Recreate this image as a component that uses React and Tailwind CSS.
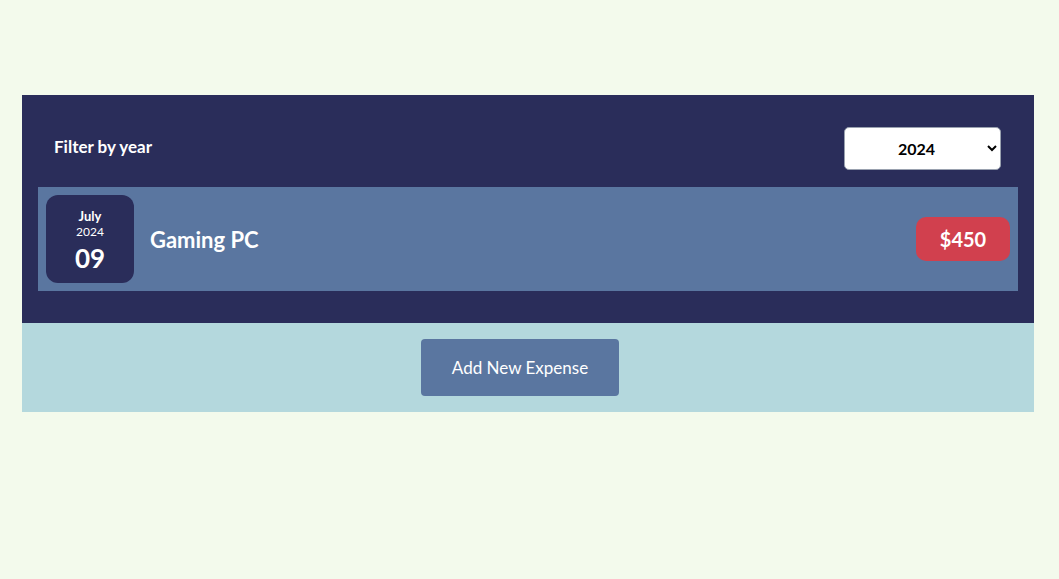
import { useState } from "react";

const expenses = [
  { id: 1, title: "Gaming PC", amount: 450, month: "July", year: "2024", day: "09" },
];

export default function App() {
  const [year, setYear] = useState("2024");

  return (
    <div className="min-h-screen bg-[#f3faec] pt-[95px] font-['Lato',sans-serif]">
      <div className="ml-[22px] w-[1012px]">
        <div className="bg-[#2a2d5a] p-4">
          <div className="flex items-center justify-between pl-4 pr-[17px] pt-4 pb-[17px]">
            <span className="text-white font-bold text-[17px] -mt-1">Filter by year</span>
            <select
              value={year}
              onChange={(e) => setYear(e.target.value)}
              className="w-[157px] h-[43px] bg-white rounded-[5px] border border-gray-400 font-bold text-[16px] text-black [text-align-last:center] px-2"
            >
              <option value="2022">2022</option>
              <option value="2023">2023</option>
              <option value="2024">2024</option>
            </select>
          </div>

          <ul className="mb-4">
            {expenses.map((e) => (
              <li key={e.id} className="flex items-center bg-[#5a76a0] h-[104px] p-2">
                <div className="w-[88px] h-[88px] rounded-xl bg-[#2a2d5a] text-white flex flex-col items-center justify-center">
                  <span className="text-[13px] font-bold leading-4 mt-1">{e.month}</span>
                  <span className="text-[12px] leading-4">{e.year}</span>
                  <span className="text-[26px] font-bold leading-8 mt-[2px]">{e.day}</span>
                </div>
                <h2 className="ml-4 flex-1 text-white text-[22px] font-bold">{e.title}</h2>
                <div className="w-[94px] h-[44px] rounded-[10px] bg-[#d1404e] text-white text-[20px] font-bold flex items-center justify-center">
                  ${e.amount}
                </div>
              </li>
            ))}
          </ul>
        </div>

        <div className="bg-[#b4d8dd] h-[89px] flex items-center justify-center pr-4">
          <button className="w-[198px] h-[57px] rounded bg-[#5a76a0] text-white text-[17px]">
            Add New Expense
          </button>
        </div>
      </div>
    </div>
  );
}
